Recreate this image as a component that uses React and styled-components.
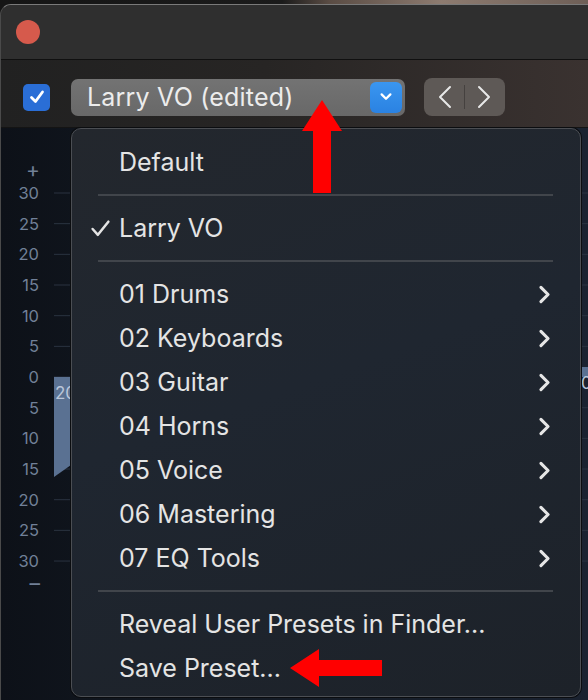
import React from "react";
import styled, { createGlobalStyle } from "styled-components";

const Global = createGlobalStyle`
  html, body { margin: 0; padding: 0; background: #181818; overflow: hidden; }
  * { box-sizing: border-box; }
`;

const FONT = `"Inter", "Liberation Sans", sans-serif`;

const Page = styled.div`
  position: relative;
  width: 588px;
  height: 700px;
  overflow: hidden;
  display: flex;
  flex-direction: column;
  background: linear-gradient(90deg, #151515 0%, #1b1b1b 48%, #5a4c44 56%, #8d7b70 75%, #6e5f57 100%);
  font-family: ${FONT};
`;

const Window = styled.div`
  margin-top: 4px;
  flex: 1;
  display: flex;
  flex-direction: column;
  border-top-left-radius: 11px;
  border-top: 1px solid #7a7a7a;
  border-left: 1px solid #4a4a4a;
  overflow: hidden;
  background: #2f2f2f;
`;

const TitleBar = styled.div`
  height: 55px;
  flex: none;
  display: flex;
  align-items: center;
  padding-left: 15px;
  background: #2f2f2f;
  border-bottom: 1px solid #101010;
`;

const CloseDot = styled.div`
  width: 24px;
  height: 24px;
  border-radius: 50%;
  background: #d65a4c;
`;

const Toolbar = styled.div`
  height: 68px;
  flex: none;
  display: flex;
  align-items: center;
  padding: 7px 0 0 22px;
  background: linear-gradient(90deg, #212121 0%, #272524 45%, #3a3230 100%);
  border-bottom: 1px solid #141414;
`;

const Check = styled.div`
  width: 27px;
  height: 27px;
  border-radius: 5px;
  background: #2a6ed6;
  display: flex;
  align-items: center;
  justify-content: center;
  margin-right: 21px;
`;

const Popup = styled.div`
  width: 334px;
  height: 37px;
  border-radius: 7px;
  background: linear-gradient(180deg, #737373, #686868);
  display: flex;
  align-items: center;
  justify-content: space-between;
  padding: 0 3px 0 16px;
  color: #ececec;
  font-size: 25px;
  letter-spacing: 0.2px;
  margin-right: 19px;
`;

const PopupArrow = styled.div`
  width: 32px;
  height: 31px;
  border-radius: 6px;
  background: linear-gradient(180deg, #3a96f0, #2a82e2);
  display: flex;
  align-items: center;
  justify-content: center;
`;

const NavGroup = styled.div`
  width: 81px;
  height: 38px;
  border-radius: 8px;
  background: #5e5956;
  display: flex;
  align-items: center;
  justify-content: space-around;
  padding: 0 8px;
`;

const NavSep = styled.div`
  width: 1px;
  height: 24px;
  background: #45413f;
`;

const Content = styled.div`
  position: relative;
  flex: 1;
  display: flex;
  background: linear-gradient(90deg, #0d1118 0%, #131a24 40%, #1a2230 100%);
`;

const Scale = styled.div`
  width: 53px;
  flex: none;
  display: flex;
  flex-direction: column;
  padding-top: 34px;
  color: #718097;
  font-size: 16.5px;
  font-family: ${FONT};
`;

const ScaleSign = styled.div`
  height: ${(p) => p.$h}px;
  line-height: ${(p) => p.$h}px;
  text-align: right;
  padding-right: 14px;
  font-size: 21px;
`;

const ScaleLabel = styled.div`
  height: 30.67px;
  line-height: 30.67px;
  text-align: right;
  padding-right: 15px;
`;

const Plot = styled.svg`
  flex: 1;
  height: 100%;
  display: block;
`;

const Menu = styled.div`
  position: absolute;
  left: 70px;
  top: 0;
  width: 510px;
  height: 569px;
  border-radius: 10px;
  border: 1px solid #4b4e53;
  box-shadow: 0 0 0 1px #0b0d10;
  background: linear-gradient(160deg, #23272d 0%, #1f2630 45%, #1d2229 100%);
  padding: 11px 0 7px;
  display: flex;
  flex-direction: column;
  color: #e4e4e4;
  font-size: 25px;
`;

const Item = styled.div`
  height: 44px;
  flex: none;
  display: flex;
  align-items: center;
  position: relative;
  padding-left: 47px;
  padding-right: 26px;
`;

const ItemText = styled.span`
  flex: 1;
`;

const CheckMark = styled.span`
  position: absolute;
  left: 18px;
  top: 0;
  height: 44px;
  display: flex;
  align-items: center;
`;

const Separator = styled.div`
  height: 22px;
  flex: none;
  display: flex;
  align-items: center;
  padding: 0 27px 0 26px;
  &::after {
    content: "";
    flex: 1;
    height: 2px;
    background: #41454b;
  }
`;

const Arrow = styled.svg`
  position: absolute;
  left: ${(p) => p.$x}px;
  top: ${(p) => p.$y}px;
`;

const Chevron = ({ dir = "right", size = 14, color = "#e6e6e6", w = 2.6 }) => {
  const d =
    dir === "right"
      ? "M5 2 L11 8 L5 14"
      : dir === "left"
      ? "M10 2 L4 8 L10 14"
      : "M3 5 L8 10 L13 5";
  return (
    <svg width={size} height={size} viewBox="0 0 16 16">
      <path d={d} fill="none" stroke={color} strokeWidth={w} strokeLinecap="round" strokeLinejoin="round" />
    </svg>
  );
};

const presets = ["01 Drums", "02 Keyboards", "03 Guitar", "04 Horns", "05 Voice", "06 Mastering", "07 EQ Tools"];
const scale = ["30", "25", "20", "15", "10", "5", "0", "5", "10", "15", "20", "25", "30"];

export default function App() {
  return (
    <>
      <Global />
      <Page>
        <Window>
          <TitleBar>
            <CloseDot />
          </TitleBar>
          <Toolbar>
            <Check>
              <svg width="18" height="18" viewBox="0 0 18 18">
                <path d="M3.5 9.5 L7.5 13.5 L14.5 4" fill="none" stroke="#fff" strokeWidth="2.8" strokeLinecap="round" strokeLinejoin="round" />
              </svg>
            </Check>
            <Popup>
              <span>Larry VO (edited)</span>
              <PopupArrow>
                <Chevron dir="down" size={14} color="#fff" w={2.6} />
              </PopupArrow>
            </Popup>
            <NavGroup>
              <svg width="14" height="24" viewBox="0 0 14 24">
                <path d="M12 2 L2 12 L12 22" fill="none" stroke="#e8e8e8" strokeWidth="2" strokeLinecap="round" strokeLinejoin="round" />
              </svg>
              <NavSep />
              <svg width="14" height="24" viewBox="0 0 14 24">
                <path d="M2 2 L12 12 L2 22" fill="none" stroke="#e8e8e8" strokeWidth="2" strokeLinecap="round" strokeLinejoin="round" />
              </svg>
            </NavGroup>
          </Toolbar>
          <Content>
            <Scale>
              <ScaleSign $h={16}>+</ScaleSign>
              {scale.map((s, i) => (
                <ScaleLabel key={i}>{s}</ScaleLabel>
              ))}
              <ScaleSign $h={14}>–</ScaleSign>
            </Scale>
            <Plot viewBox="0 0 534 572" preserveAspectRatio="none">
              {scale.map((_, i) => (
                <line key={i} x1="0" x2="534" y1={65 + i * 30.67} y2={65 + i * 30.67} stroke="#2a3340" strokeWidth="1" />
              ))}
              <polygon points="0,249 17,249 17,337 0,349" fill="#5a7192" />
              <text x="1" y="271" fill="#b9c6da" fontSize="17" fontFamily="Inter, Liberation Sans, sans-serif">20</text>
              <rect x="526" y="239" width="8" height="10" fill="#5a7192" />
              <text x="527" y="261" fill="#b9c6da" fontSize="17" fontFamily="Inter, Liberation Sans, sans-serif">0</text>
            </Plot>
            <Menu>
              <Item><ItemText>Default</ItemText></Item>
              <Separator />
              <Item>
                <CheckMark>
                  <svg width="21" height="21" viewBox="0 0 20 20">
                    <path d="M2.5 10.5 L7.5 16 L17.5 3.5" fill="none" stroke="#e4e4e4" strokeWidth="2.4" strokeLinecap="round" strokeLinejoin="round" />
                  </svg>
                </CheckMark>
                <ItemText>Larry VO</ItemText>
              </Item>
              <Separator />
              {presets.map((p) => (
                <Item key={p}>
                  <ItemText>{p}</ItemText>
                  <Chevron dir="right" size={19} />
                </Item>
              ))}
              <Separator />
              <Item><ItemText>Reveal User Presets in Finder...</ItemText></Item>
              <Item><ItemText>Save Preset...</ItemText></Item>
            </Menu>
          </Content>
        </Window>
        <Arrow $x={302} $y={100} width="42" height="94" viewBox="0 0 42 94">
          <polygon points="20,0 40,31 29,31 29,93 11,93 11,31 0,31" fill="#ff0000" />
        </Arrow>
        <Arrow $x={290} $y={648} width="93" height="40" viewBox="0 0 93 40">
          <polygon points="0,20 29,1 29,12 92,12 92,28 29,28 29,39" fill="#ff0000" />
        </Arrow>
      </Page>
    </>
  );
}
